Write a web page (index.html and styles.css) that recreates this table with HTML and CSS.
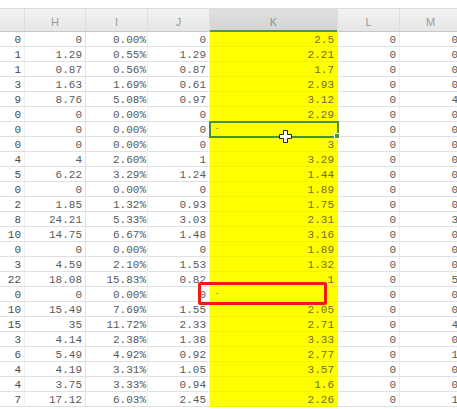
FILE: index.html
```html
<!DOCTYPE html>
<html>
<head>
<meta charset="utf-8">
<link rel="stylesheet" href="styles.css">
</head>
<body>
<div class="sheet">
  <div class="topbar"></div>
  <div class="hdr">
    <div class="hc g"></div><div class="hc h">H</div><div class="hc i">I</div><div class="hc j">J</div><div class="hc k">K</div><div class="hc l">L</div><div class="hc m">M</div>
  </div>
  <div class="rows">
    <div class="r"><div class="c g">0</div><div class="c h">0</div><div class="c i">0.00%</div><div class="c j">0</div><div class="c k">2.5</div><div class="c l">0</div><div class="c m">0</div></div>
    <div class="r"><div class="c g">1</div><div class="c h">1.29</div><div class="c i">0.55%</div><div class="c j">1.29</div><div class="c k">2.21</div><div class="c l">0</div><div class="c m">0</div></div>
    <div class="r"><div class="c g">1</div><div class="c h">0.87</div><div class="c i">0.56%</div><div class="c j">0.87</div><div class="c k">1.7</div><div class="c l">0</div><div class="c m">0</div></div>
    <div class="r"><div class="c g">3</div><div class="c h">1.63</div><div class="c i">1.69%</div><div class="c j">0.61</div><div class="c k">2.93</div><div class="c l">0</div><div class="c m">0</div></div>
    <div class="r"><div class="c g">9</div><div class="c h">8.76</div><div class="c i">5.08%</div><div class="c j">0.97</div><div class="c k">3.12</div><div class="c l">0</div><div class="c m">4</div></div>
    <div class="r"><div class="c g">0</div><div class="c h">0</div><div class="c i">0.00%</div><div class="c j">0</div><div class="c k">2.29</div><div class="c l">0</div><div class="c m">0</div></div>
    <div class="r"><div class="c g">0</div><div class="c h">0</div><div class="c i">0.00%</div><div class="c j">0</div><div class="c k sel"><span class="dash">-</span><span class="handle"></span><svg class="cursor" width="13" height="13" viewBox="0 0 13 13"><path d="M4.5 0.5h4v4h4v4h-4v4h-4v-4h-4v-4h4z" fill="#fff" stroke="#222" stroke-width="1"/></svg></div><div class="c l">0</div><div class="c m">0</div></div>
    <div class="r"><div class="c g">0</div><div class="c h">0</div><div class="c i">0.00%</div><div class="c j">0</div><div class="c k">3</div><div class="c l">0</div><div class="c m">0</div></div>
    <div class="r"><div class="c g">4</div><div class="c h">4</div><div class="c i">2.60%</div><div class="c j">1</div><div class="c k">3.29</div><div class="c l">0</div><div class="c m">0</div></div>
    <div class="r"><div class="c g">5</div><div class="c h">6.22</div><div class="c i">3.29%</div><div class="c j">1.24</div><div class="c k">1.44</div><div class="c l">0</div><div class="c m">0</div></div>
    <div class="r"><div class="c g">0</div><div class="c h">0</div><div class="c i">0.00%</div><div class="c j">0</div><div class="c k">1.89</div><div class="c l">0</div><div class="c m">0</div></div>
    <div class="r"><div class="c g">2</div><div class="c h">1.85</div><div class="c i">1.32%</div><div class="c j">0.93</div><div class="c k">1.75</div><div class="c l">0</div><div class="c m">0</div></div>
    <div class="r"><div class="c g">8</div><div class="c h">24.21</div><div class="c i">5.33%</div><div class="c j">3.03</div><div class="c k">2.31</div><div class="c l">0</div><div class="c m">3</div></div>
    <div class="r"><div class="c g">10</div><div class="c h">14.75</div><div class="c i">6.67%</div><div class="c j">1.48</div><div class="c k">3.16</div><div class="c l">0</div><div class="c m">0</div></div>
    <div class="r"><div class="c g">0</div><div class="c h">0</div><div class="c i">0.00%</div><div class="c j">0</div><div class="c k">1.89</div><div class="c l">0</div><div class="c m">0</div></div>
    <div class="r"><div class="c g">3</div><div class="c h">4.59</div><div class="c i">2.10%</div><div class="c j">1.53</div><div class="c k">1.32</div><div class="c l">0</div><div class="c m">0</div></div>
    <div class="r"><div class="c g">22</div><div class="c h">18.08</div><div class="c i">15.83%</div><div class="c j">0.82</div><div class="c k">1</div><div class="c l">0</div><div class="c m">5</div></div>
    <div class="r"><div class="c g">0</div><div class="c h">0</div><div class="c i">0.00%</div><div class="c j">0</div><div class="c k"><span class="dash">-</span></div><div class="c l">0</div><div class="c m">0</div></div>
    <div class="r"><div class="c g">10</div><div class="c h">15.49</div><div class="c i">7.69%</div><div class="c j">1.55</div><div class="c k">2.05</div><div class="c l">0</div><div class="c m">0</div></div>
    <div class="r"><div class="c g">15</div><div class="c h">35</div><div class="c i">11.72%</div><div class="c j">2.33</div><div class="c k">2.71</div><div class="c l">0</div><div class="c m">4</div></div>
    <div class="r"><div class="c g">3</div><div class="c h">4.14</div><div class="c i">2.38%</div><div class="c j">1.38</div><div class="c k">3.33</div><div class="c l">0</div><div class="c m">0</div></div>
    <div class="r"><div class="c g">6</div><div class="c h">5.49</div><div class="c i">4.92%</div><div class="c j">0.92</div><div class="c k">2.77</div><div class="c l">0</div><div class="c m">1</div></div>
    <div class="r"><div class="c g">4</div><div class="c h">4.19</div><div class="c i">3.31%</div><div class="c j">1.05</div><div class="c k">3.57</div><div class="c l">0</div><div class="c m">0</div></div>
    <div class="r"><div class="c g">4</div><div class="c h">3.75</div><div class="c i">3.33%</div><div class="c j">0.94</div><div class="c k">1.6</div><div class="c l">0</div><div class="c m">0</div></div>
    <div class="r"><div class="c g">7</div><div class="c h">17.12</div><div class="c i">6.03%</div><div class="c j">2.45</div><div class="c k">2.26</div><div class="c l">0</div><div class="c m">1</div></div>
  </div>
  <div class="redbox"></div>
</div>
</body>
</html>
```
FILE: styles.css
```css
html, body {
  margin: 0;
  padding: 0;
  background: #fff;
  overflow: hidden;
}
body {
  width: 457px;
  height: 409px;
}
.sheet {
  position: relative;
  width: 462px;
  font-family: "Liberation Mono", monospace;
}
.topbar {
  height: 8px;
  border-bottom: 1px solid #dcdcdc;
  background: #fff;
}
.hdr {
  display: flex;
  height: 23px;
  box-sizing: border-box;
  background: linear-gradient(#f2f2f2, #e6e6e6);
  border-bottom: 1px solid #c8c8c8;
}
.hc {
  flex: none;
  box-sizing: border-box;
  height: 22px;
  border-right: 1px solid #dedede;
  text-align: center;
  font: 11px/26px "Liberation Sans", sans-serif;
  color: #9a9a9a;
}
.hc.k {
  background: linear-gradient(#dfdfdf, #d4d4d4);
  box-shadow: inset 0 -2px 0 #4b9a4b;
  height: 23px;
  color: #7fa07f;
}
.rows {
  display: flex;
  flex-direction: column;
}
.r {
  display: flex;
  height: 15px;
}
.c {
  flex: none;
  box-sizing: border-box;
  height: 15px;
  border-right: 1px solid #eeeeee;
  border-bottom: 1px solid #e0e0e0;
  padding-right: 3px;
  text-align: right;
  font-size: 11px;
  line-height: 16px;
  color: #5a5a5a;
  white-space: pre;
  overflow: hidden;
}
.g { width: 25px; }
.h { width: 61px; }
.i { width: 62px; }
.j { width: 62px; }
.k { width: 128px; }
.l { width: 62px; }
.m { width: 62px; }
.c.h { border-right-color: #e2e2e2; }
.c.i { padding-right: 1px; }
.c.g { color: #4a4a4a; }
.c.k {
  background: #ffff00;
  border-bottom-color: #f6f300;
  border-right-color: #f0ee60;
  color: #746c2a;
  position: relative;
  overflow: visible;
}
.c.sel {
  outline: 2px solid #4a8f3a;
  outline-offset: -1px;
  z-index: 2;
}
.dash {
  position: absolute;
  left: 4px;
  top: -1px;
  font-size: 9px;
  color: #8a8a60;
}
.handle {
  position: absolute;
  right: -3px;
  bottom: -3px;
  width: 4px;
  height: 4px;
  background: #4a8f3a;
  border: 1px solid #fff;
}
.cursor {
  position: absolute;
  left: 69px;
  top: 8px;
}
.redbox {
  position: absolute;
  left: 198px;
  top: 282px;
  width: 129px;
  height: 23px;
  box-sizing: border-box;
  border: 3px solid #f21818;
  border-radius: 2px;
  z-index: 3;
}
```
